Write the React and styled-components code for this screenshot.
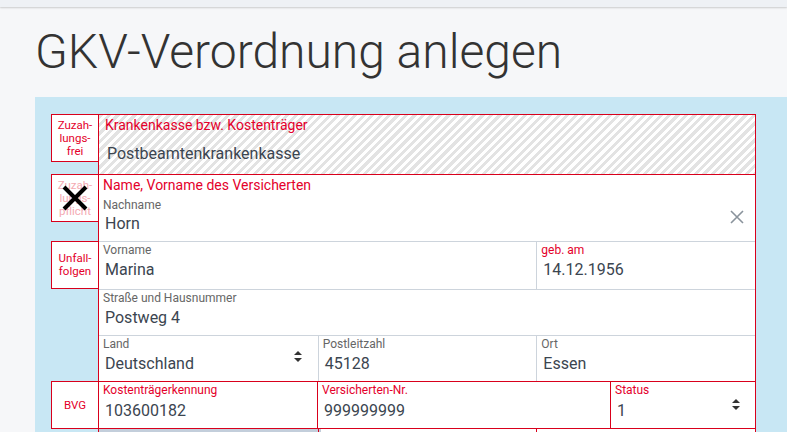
import React from 'react'
import styled, { createGlobalStyle } from 'styled-components'

const RED = '#d9001b'
const RED_TEXT = '#e4002b'
const GRAY_LINE = '#cdd4dc'

const GlobalStyle = createGlobalStyle`
  html, body {
    margin: 0;
    padding: 0;
    background: #f6f7f9;
    font-family: Roboto, "Liberation Sans", sans-serif;
    overflow: hidden;
  }
`

const TopBar = styled.div`
  height: 7px;
  background: #eef1f5;
  box-shadow: 0 1px 2px rgba(0, 0, 0, 0.18);
`

const Title = styled.h1`
  margin: 17px 0 18px 35px;
  font-size: 48px;
  line-height: 55px;
  font-weight: 300;
  color: #333;
`

const Panel = styled.div`
  margin-left: 35px;
  min-height: 335px;
  background: #c8e7f4;
  padding: 17px 0 0 16px;
  box-sizing: border-box;
`

const Form = styled.div`
  width: 705px;
  display: flex;
  flex-direction: column;
`

const Section = styled.div`
  display: flex;
  align-items: flex-start;
  & + & {
    margin-top: -1px;
  }
`

const TagStack = styled.div`
  width: 48px;
  flex-shrink: 0;
  display: flex;
  flex-direction: column;
  gap: 19px;
`

const Tag = styled.div`
  position: relative;
  height: 48px;
  box-sizing: border-box;
  border: 1px solid ${RED};
  background: #fff;
  display: flex;
  align-items: center;
  justify-content: center;
  text-align: center;
  font-size: 11.5px;
  line-height: 13px;
  color: ${p => (p.$off ? '#f4aab2' : RED_TEXT)};
`

const CrossMark = styled.svg`
  position: absolute;
  left: 50%;
  top: 50%;
  width: 28px;
  height: 28px;
  margin: -14px 0 0 -14px;
`

const Group = styled.div`
  flex: 1;
  margin-left: -1px;
  border: 1px solid ${RED};
  background: ${p =>
    p.$hatched
      ? 'repeating-linear-gradient(135deg, #e3e3e3 0 3px, #fff 3px 6px)'
      : '#fff'};
  height: ${p => (p.$height ? `${p.$height}px` : 'auto')};
  box-sizing: border-box;
`

const Row = styled.div`
  display: grid;
  grid-template-columns: ${p => p.$cols || '1fr'};
  height: ${p => p.$height}px;
  box-sizing: border-box;
  border-bottom: ${p => (p.$last ? 'none' : `1px solid ${GRAY_LINE}`)};
`

const Cell = styled.div`
  position: relative;
  padding: ${p => p.$pad || '1px 4px 0'};
  border-left: ${p => (p.$first ? 'none' : `1px solid ${p.$red ? RED : GRAY_LINE}`)};
  min-width: 0;
`

const GroupLabel = styled.div`
  font-size: 14px;
  line-height: 16px;
  color: ${RED_TEXT};
`

const Label = styled.div`
  font-size: 12px;
  line-height: 14px;
  margin-top: ${p => p.$gap || 0}px;
  color: ${p => (p.$red ? RED_TEXT : '#666')};
`

const Value = styled.div`
  margin-top: ${p => p.$gap ?? 3}px;
  padding-left: 2px;
  font-size: 16px;
  line-height: 20px;
  color: #3b4550;
`

const SideIcon = styled.span`
  position: absolute;
  right: ${p => p.$right}px;
  top: ${p => p.$top}px;
  display: flex;
`

const Strip = styled.div`
  height: 3px;
  margin: 0 -3px 0 0;
  background: #c3cedb;
`

const SortIcon = () => (
  <svg width="8" height="11" viewBox="0 0 8 11">
    <path d="M4 0 L8 4 L0 4 Z M0 7 L8 7 L4 11 Z" fill="#333" />
  </svg>
)

const ClearIcon = () => (
  <svg width="14" height="14" viewBox="0 0 14 14">
    <path d="M1 1 L13 13 M13 1 L1 13" stroke="#8a939c" strokeWidth="1.6" />
  </svg>
)

const App = () => (
  <>
    <GlobalStyle />
    <TopBar />
    <Title>GKV-Verordnung anlegen</Title>
    <Panel>
      <Form>
        <Section>
          <TagStack>
            <Tag>
              Zuzah-
              <br />
              lungs-
              <br />
              frei
            </Tag>
          </TagStack>
          <Group $hatched $height={61}>
            <Cell $first $pad="2px 6px 0">
              <GroupLabel>Krankenkasse bzw. Kostenträger</GroupLabel>
              <Value $gap={11}>Postbeamtenkrankenkasse</Value>
            </Cell>
          </Group>
        </Section>

        <Section>
          <TagStack>
            <Tag $off>
              Zuzah-
              <br />
              lungs-
              <br />
              pflicht
              <CrossMark viewBox="0 0 28 28">
                <path d="M3 3 L25 25 M25 3 L3 25" stroke="#000" strokeWidth="4" />
              </CrossMark>
            </Tag>
            <Tag>
              Unfall-
              <br />
              folgen
            </Tag>
          </TagStack>
          <Group>
            <Row $height={67}>
              <Cell $first $pad="2px 4px 0">
                <GroupLabel>Name, Vorname des Versicherten</GroupLabel>
                <Label $gap={5}>Nachname</Label>
                <Value $gap={2}>Horn</Value>
                <SideIcon $right={11} $top={35}>
                  <ClearIcon />
                </SideIcon>
              </Cell>
            </Row>
            <Row $height={48} $cols="2fr 1fr">
              <Cell $first>
                <Label>Vorname</Label>
                <Value>Marina</Value>
              </Cell>
              <Cell>
                <Label $red>geb. am</Label>
                <Value>14.12.1956</Value>
              </Cell>
            </Row>
            <Row $height={46}>
              <Cell $first>
                <Label>Straße und Hausnummer</Label>
                <Value>Postweg 4</Value>
              </Cell>
            </Row>
            <Row $height={45} $cols="1fr 1fr 1fr" $last>
              <Cell $first>
                <Label>Land</Label>
                <Value $gap={3}>Deutschland</Value>
                <SideIcon $right={16} $top={15}>
                  <SortIcon />
                </SideIcon>
              </Cell>
              <Cell>
                <Label>Postleitzahl</Label>
                <Value $gap={3}>45128</Value>
              </Cell>
              <Cell>
                <Label>Ort</Label>
                <Value $gap={3}>Essen</Value>
              </Cell>
            </Row>
          </Group>
        </Section>

        <Section>
          <TagStack>
            <Tag>BVG</Tag>
          </TagStack>
          <Group>
            <Row $height={46} $cols="218px 293px 1fr" $last>
              <Cell $first>
                <Label $red>Kostenträgerkennung</Label>
                <Value $gap={4}>103600182</Value>
              </Cell>
              <Cell $red>
                <Label $red>Versicherten-Nr.</Label>
                <Value $gap={4}>999999999</Value>
              </Cell>
              <Cell $red>
                <Label $red>Status</Label>
                <Value $gap={4}>1</Value>
                <SideIcon $right={15} $top={17}>
                  <SortIcon />
                </SideIcon>
              </Cell>
            </Row>
          </Group>
        </Section>

        <Section>
          <TagStack />
          <Group>
            <Row $height={4} $cols="1fr 1fr 1fr" $last>
              <Cell $first $pad="0">
                <Strip />
              </Cell>
              <Cell $red />
              <Cell $red />
            </Row>
          </Group>
        </Section>
      </Form>
    </Panel>
  </>
)

export default App
